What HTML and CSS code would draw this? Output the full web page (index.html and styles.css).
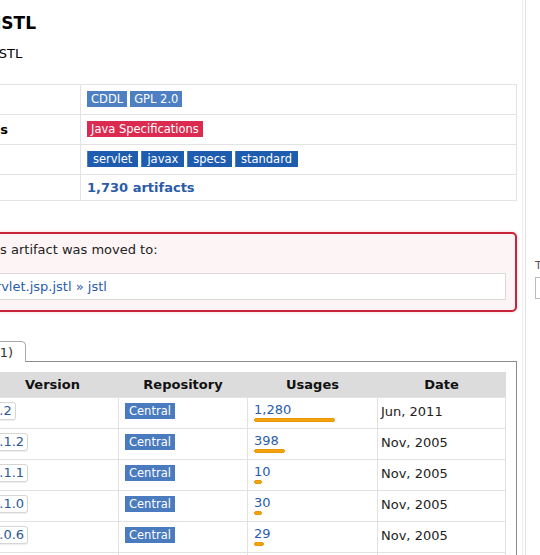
FILE: index.html
```html
<!DOCTYPE html>
<html>
<head>
<meta charset="utf-8">
<title>JSTL</title>
<link rel="stylesheet" href="styles.css">
</head>
<body>
<div class="page">
  <main class="main">
    <div class="im">
      <h2 class="im-title">JSTL</h2>
      <p class="im-subtitle">JSTL</p>
    </div>

    <table class="info">
      <colgroup><col class="k"><col></colgroup>
      <tr><th>License</th><td class="bd"><div class="chips"><span class="b lic">CDDL</span><span class="b lic">GPL 2.0</span></div></td></tr>
      <tr><th>Categories</th><td class="bd"><div class="chips"><span class="b cat">Java Specifications</span></div></td></tr>
      <tr><th>Tags</th><td class="bd"><div class="chips"><span class="b tag">servlet</span><span class="b tag">javax</span><span class="b tag">specs</span><span class="b tag">standard</span></div></td></tr>
      <tr><th>Used By</th><td class="tx"><a class="strong" href="#">1,730 artifacts</a></td></tr>
    </table>

    <div class="alert">
      <p>Note: This artifact was moved to:</p>
      <div class="moved"><a href="#">javax.servlet.jsp.jstl</a> » <a href="#">jstl</a></div>
    </div>

    <div class="tabs"><span class="tab">Central (11)</span></div>
    <div class="tabbox">
      <table class="versions">
        <colgroup><col class="c-grp"><col class="c-ver"><col class="c-repo"><col class="c-use"><col class="c-date"></colgroup>
        <thead>
          <tr><th></th><th class="ver">Version</th><th>Repository</th><th>Usages</th><th>Date</th></tr>
        </thead>
        <tbody>
          <tr>
            <td class="grp">1.2.x</td>
            <td><a class="vb" href="#">1.2</a></td>
            <td><span class="rb">Central</span></td>
            <td><a href="#">1,280</a><div class="bar" style="width:81px"></div></td>
            <td class="dt">Jun, 2011</td>
          </tr>
          <tr>
            <td class="grp" rowspan="3">1.1.x</td>
            <td><a class="vb" href="#">1.1.2</a></td>
            <td><span class="rb">Central</span></td>
            <td><a href="#">398</a><div class="bar" style="width:31px"></div></td>
            <td class="dt">Nov, 2005</td>
          </tr>
          <tr>
            <td><a class="vb" href="#">1.1.1</a></td>
            <td><span class="rb">Central</span></td>
            <td><a href="#">10</a><div class="bar" style="width:8px"></div></td>
            <td class="dt">Nov, 2005</td>
          </tr>
          <tr>
            <td><a class="vb" href="#">1.1.0</a></td>
            <td><span class="rb">Central</span></td>
            <td><a href="#">30</a><div class="bar" style="width:8px"></div></td>
            <td class="dt">Nov, 2005</td>
          </tr>
          <tr>
            <td class="grp" rowspan="2">1.0.x</td>
            <td><a class="vb" href="#">1.0.6</a></td>
            <td><span class="rb">Central</span></td>
            <td><a href="#">29</a><div class="bar" style="width:10px"></div></td>
            <td class="dt">Nov, 2005</td>
          </tr>
          <tr>
            <td><a class="vb" href="#">1.0.5</a></td>
            <td><span class="rb">Central</span></td>
            <td><a href="#">12</a><div class="bar" style="width:8px"></div></td>
            <td class="dt">Nov, 2005</td>
          </tr>
        </tbody>
      </table>
    </div>
  </main>
  <div class="divider"></div>
  <aside class="side">
    <div class="side-title">Trending</div>
    <div class="side-box"></div>
  </aside>
</div>
</body>
</html>
```

FILE: styles.css
```css
html, body {
  margin: 0;
  padding: 0;
  overflow: hidden;
  background: #fff;
}
body {
  font-family: "DejaVu Sans", Verdana, sans-serif;
  font-size: 13px;
  color: #1a1a1a;
  width: 540px;
  height: 555px;
}
a {
  color: #2a5caa;
  text-decoration: none;
}
.page {
  display: flex;
  align-items: flex-start;
}
.main {
  flex: none;
  width: 595px;
  margin-left: -78px;
}

/* header */
.im {
  padding: 12px 0 0 73px;
  margin-bottom: 22px;
}
.im-title {
  margin: 0;
  font-size: 17px;
  line-height: 22px;
  font-weight: bold;
  color: #000;
}
.im-subtitle {
  margin: 12px 0 0;
  line-height: 16px;
  color: #000;
}

/* info grid */
.info {
  width: 100%;
  border-collapse: collapse;
  table-layout: fixed;
}
.info col.k { width: 158px; }
.info th, .info td {
  border: 1px solid #e3e3e3;
}
.info th {
  text-align: left;
  padding: 0 6px;
  font-weight: bold;
  color: #000;
}
.info td.bd { padding: 6px 6px 7px; }
.info td.tx { padding: 4px 6px; line-height: 17px; }
.chips {
  display: flex;
  gap: 3px;
  line-height: 16px;
}
.b {
  display: inline-block;
  font-size: 11.5px;
  line-height: 16px;
  padding: 0 4px;
  color: #fff;
}
.lic { background: #4d7fc2; }
.cat { background: #dc2b50; }
.tag {
  background: #1e5caf;
  padding: 0 6px;
  box-shadow: inset 1px 0 0 rgba(255, 255, 255, 0.22);
}
.strong { font-weight: bold; }

/* relocation alert */
.alert {
  margin: 31px 0 0 8px;
  border: 2px solid #c9233b;
  border-radius: 5px;
  background: #fdf4f6;
  padding: 8px 9px 10px;
  box-shadow: 0 0 3px #f6c8cf;
}
.alert p {
  margin: 0 0 15px;
  line-height: 16px;
  color: #222;
}
.moved {
  background: #fff;
  border: 1px solid #dadada;
  padding: 4px 6px 4px 0;
  line-height: 17px;
  color: #2a5caa;
}

/* tabs */
.tabs {
  margin-top: 29px;
  display: flex;
}
.tab {
  position: relative;
  background: #fff;
  border: 1px solid #a8a8a8;
  border-bottom: none;
  border-radius: 5px 5px 0 0;
  padding: 3px 12px 1px;
  line-height: 16px;
  margin-bottom: -1px;
  color: #333;
}
.tabbox {
  border: 1px solid #8c8c8c;
  padding: 10px;
}

/* versions */
.versions {
  border-collapse: collapse;
  table-layout: fixed;
  width: 572px;
}
.versions col.c-grp { width: 47px; }
.versions col.c-ver { width: 138px; }
.versions col.c-repo { width: 129px; }
.versions col.c-use { width: 130px; }
.versions col.c-date { width: 128px; }
.versions th {
  background: #dcdcdc;
  padding: 4px 6px;
  line-height: 17px;
  font-weight: bold;
  text-align: center;
  color: #111;
  border: none;
}
.versions th.ver { padding-left: 12px; }
.versions td {
  border: 1px solid #e2e2e2;
  padding: 4px 6px 6px;
  vertical-align: top;
  line-height: 16px;
}
.versions td.grp { vertical-align: middle; }
.versions td.dt {
  padding: 6px 4px 6px 3px;
  color: #222;
}
.vb {
  display: inline-block;
  vertical-align: top;
  border: 1px solid #d6d6d6;
  border-radius: 3px;
  padding: 0 3px;
  line-height: 16px;
  background: #fff;
  color: #2b5996;
  box-shadow: 0 1px 1px rgba(0, 0, 0, 0.07);
}
.rb {
  display: inline-block;
  vertical-align: top;
  margin-top: 1px;
  background: #4a7bbf;
  color: #fff;
  font-size: 11.5px;
  line-height: 16px;
  padding: 0 4px;
}
.bar {
  box-sizing: border-box;
  height: 4px;
  background: #f4a30d;
  border: 1px solid #e6980a;
  border-radius: 2px;
}

/* sidebar edge */
.divider {
  flex: none;
  width: 2px;
  height: 555px;
  margin-left: 5px;
  border-left: 1px solid #efefef;
  border-right: 1px solid #e3e3e3;
}
.side {
  flex: none;
  width: 200px;
  padding: 259px 0 0 9px;
}
.side-title {
  font-size: 11px;
  line-height: 14px;
  color: #555;
}
.side-box {
  margin-top: 4px;
  height: 20px;
  border: 1px solid #bbb;
}
```
